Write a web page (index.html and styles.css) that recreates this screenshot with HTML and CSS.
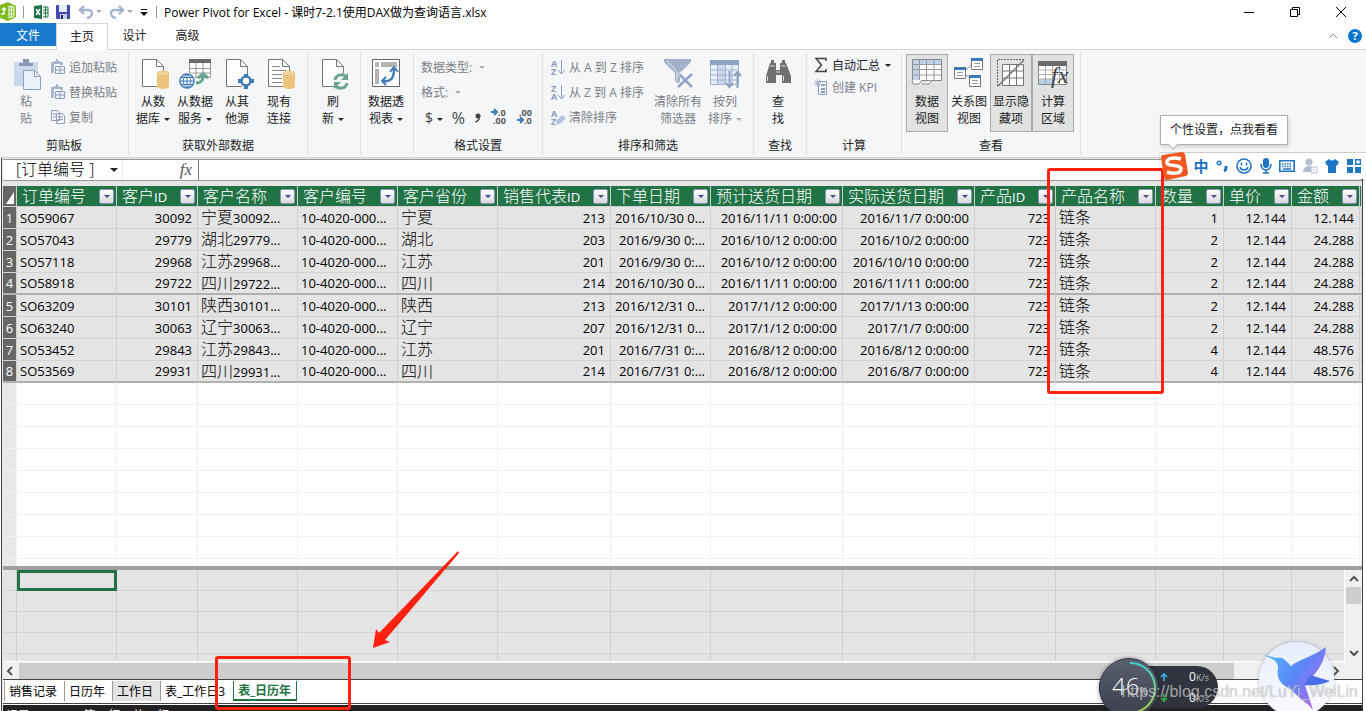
FILE: index.html
```html
<!DOCTYPE html>
<html lang="zh-CN">
<head>
  <meta charset="utf-8">
  <meta name="viewport" content="width=device-width, initial-scale=1">
  <title>Power Pivot for Excel</title>
  <link rel="stylesheet" href="styles.css">
</head>
<body>
  <svg class="defs" aria-hidden="true">
    <symbol id="page" viewBox="0 0 32 32">
      <path d="M5.500 1.500h14l7 7v20h-21z" fill="#fff" stroke="#777"/>
      <path d="M19.500 1.500v7h7" fill="none" stroke="#777"/>
    </symbol>
    <symbol id="db" viewBox="0 0 14 20">
      <path d="M1 3v13c0 4 12 4 12 0V3z" fill="#ecc47c"/>
      <ellipse cx="7" cy="3.500" rx="6" ry="2.500" fill="#f3d59c" stroke="#e0b565" stroke-width=".6"/>
    </symbol>
    <symbol id="clip" viewBox="0 0 16 16">
      <path d="M1 3h3v11H1zM10 3h3v3h-3zM4 2h6v3H4zM6 0h2v2H6z" fill="#a9b6cd"/>
      <path d="M5.500 7.500h9v7h-9zM5.500 11h9M10 7.500v7" fill="#eef2fa" stroke="#8c9cba"/>
    </symbol>
  </svg>

  <div class="app">
    <header class="titlebar">
      <svg width="18" height="20" viewBox="0 0 18 20"><path d="M0 3l8-3 8 4v11l-8 4-8-3z" fill="#7fba1e"/><path d="M9 4l5 1v9l-5 2zM9 8h5M9 12h5M11.500 4v11" fill="none" stroke="#fff"/><path d="M1 12h3V6M2 8l2-2 2 2" fill="none" stroke="#fff" stroke-width="1.500"/></svg>
      <i class="bar"></i>
      <svg width="15" height="14" viewBox="0 0 15 14"><path d="M0 1l8-1v14l-8-1z" fill="#1e7145"/><path d="M2 4l4 6M6 4l-4 6" stroke="#fff" stroke-width="1.500"/><path d="M9 2h5v10H9M9 5h5M9 8h5M11.500 2v10" fill="none" stroke="#1e7145"/></svg>
      <svg class="save" width="14" height="14" viewBox="0 0 14 14"><path d="M0 0h14v14H1l-1-1z" fill="#4349b0"/><path d="M3 0h8v7H3z" fill="#e8edfb"/><path d="M4 9h7v5H4z" fill="#c5cbe8"/><path d="M5 10h2v4H5z" fill="#222a66"/></svg>
      <svg width="16" height="14" viewBox="0 0 16 14"><path d="M1 5h9c6 0 5 7-1 8M6 1L2 5l4 4" fill="none" stroke="#a3b4d1" stroke-width="2.400"/></svg>
      <i class="caret pale"></i>
      <svg class="redo" width="16" height="14" viewBox="0 0 16 14"><path d="M15 5H6C0 5 1 12 7 13M10 1l4 4-4 4" fill="none" stroke="#a3b4d1" stroke-width="2.400"/></svg>
      <i class="caret pale"></i>
      <svg class="more" width="8" height="8" viewBox="0 0 8 8"><path d="M1 1.500h6" stroke="#111"/><path d="M0 4h8L4 8z" fill="#111"/></svg>
      <i class="bar"></i>
      <h1>Power Pivot for Excel - 课时7-2.1使用DAX做为查询语言.xlsx</h1>
      <div class="window-buttons">
        <button aria-label="最小化"><svg width="12" height="12"><path d="M1 6.500h10" stroke="#000"/></svg></button>
        <button aria-label="还原"><svg width="12" height="12"><path d="M1.500 3.500h7v7h-7zM3.500 3V1.500h7v7H9" fill="none" stroke="#000"/></svg></button>
        <button aria-label="关闭"><svg width="12" height="12"><path d="M1 1l10 10M11 1L1 11" stroke="#000"/></svg></button>
      </div>
    </header>

    <nav class="menu">
      <button class="file">文件</button>
      <button class="active">主页</button>
      <button>设计</button>
      <button>高级</button>
      <div class="menu-right">
        <svg width="10" height="6"><path d="M1 5l4-4 4 4" fill="none" stroke="#888"/></svg>
        <button class="help" aria-label="帮助">?</button>
      </div>
    </nav>

    <section class="ribbon">
      <div class="group g-clipboard">
        <div class="tools">
          <button class="big dim">
            <svg width="32" height="32" viewBox="0 0 32 32"><path d="M4 4h24v24H4z" fill="#ccd7ea"/><path d="M9 5h4V1h6v4h4v3H9z" fill="#8797b5"/><path d="M13.500 12.500h11l6 6v13h-17z" fill="#eaf0fa" stroke="#8ea0c0"/><path d="M24.500 12.500v6h6" fill="none" stroke="#8ea0c0"/></svg>
            <span>粘<br>贴</span>
          </button>
          <div class="stack">
            <button class="small dim"><svg width="16" height="16"><use href="#clip"/></svg>追加粘贴</button>
            <button class="small dim"><svg width="16" height="16"><use href="#clip"/></svg>替换粘贴</button>
            <button class="small dim"><svg width="16" height="16" viewBox="0 0 16 16"><path d="M1.500 1.500h6l2 2v8h-8zM6.500 4.500h6l2 2v8h-8z" fill="#f1f4fa" stroke="#8c9cba"/><path d="M3 5h3M3 8h3M8 8h5M8 10.500h5" stroke="#8c9cba"/></svg>复制</button>
          </div>
        </div>
        <div class="caption">剪贴板</div>
      </div>

      <div class="group g-external">
        <div class="tools">
          <button class="big"><svg width="32" height="32"><use href="#page" width="32" height="32"/><use href="#db" x="19" y="12" width="14" height="20"/></svg><span>从数<br>据库<i class="caret"></i></span></button>
          <button class="big"><svg width="32" height="32" viewBox="0 0 32 32"><path d="M10.500 1.500h21v18h-21z" fill="#fff" stroke="#999"/><path d="M10 1h22v4H10z" fill="#6b6b6b"/><path d="M10 10.500h21M10 15h21M17 5v14M24 5v14" stroke="#999"/><circle cx="8" cy="23" r="8.500" fill="#f4f6f8"/><circle cx="8" cy="23" r="7" fill="#fff" stroke="#3e7ab8" stroke-width="1.500"/><path d="M1 23h14M2 19.500h12M2 26.500h12M8 16v14M8 16c-5 4-5 10 0 14M8 16c5 4 5 10 0 14" fill="none" stroke="#3e7ab8"/><path d="M17 25c6 0 7-3 7-7M19 20l5-4 5 4" fill="none" stroke="#6aa58d" stroke-width="3"/></svg><span>从数据<br>服务<i class="caret"></i></span></button>
          <button class="big"><svg width="32" height="32" viewBox="0 0 32 32"><use href="#page" width="32" height="32"/><circle cx="25" cy="23" r="7" fill="#f4f6f8"/><circle cx="25" cy="23" r="4.500" fill="#fff" stroke="#3e7ab8" stroke-width="2.500"/><path d="M23 16h4v3h-4zM23 27h4v4h-4zM17 21h4v4h-4zM29 21h4v4h-4z" fill="#3e7ab8"/></svg><span>从其<br>他源</span></button>
          <button class="big"><svg width="32" height="32"><use href="#page" width="32" height="32"/><path d="M9 8.500h8M9 12.500h14M9 16.500h10M9 20.500h10M9 24.500h10" stroke="#888"/><use href="#db" x="19" y="12" width="14" height="20"/></svg><span>现有<br>连接</span></button>
        </div>
        <div class="caption">获取外部数据</div>
      </div>

      <div class="group g-single">
        <div class="tools">
          <button class="big"><svg width="32" height="32" viewBox="0 0 32 32"><use href="#page" width="32" height="32"/><circle cx="24" cy="23" r="8" fill="#f4f6f8"/><path d="M18 22c1-6 9-7 12-2M30 25c-1 6-9 7-12 2" fill="none" stroke="#6aa58d" stroke-width="3"/><path d="M31 15v7h-7zM17 31v-7h7z" fill="#6aa58d"/></svg><span>刷<br>新<i class="caret"></i></span></button>
        </div>
      </div>

      <div class="group g-single">
        <div class="tools">
          <button class="big"><svg width="32" height="32" viewBox="0 0 32 32"><path d="M2.500 1.500h27v27h-27z" fill="#fff" stroke="#666"/><path d="M5 4h4v5H5zM11 4h16v5H11zM5 11h4v15H5z" fill="#b3b3b3"/><path d="M13 23c8 1 11-3 11-12" fill="none" stroke="#3e7ab8" stroke-width="2.500"/><path d="M20 14l4-5 4 5M16 19l-4 4 4 4" fill="none" stroke="#3e7ab8" stroke-width="2"/></svg><span>数据透<br>视表<i class="caret"></i></span></button>
        </div>
      </div>

      <div class="group g-format">
        <div class="tools">
          <div class="stack">
            <button class="small dim">数据类型:<i class="caret pale"></i></button>
            <button class="small dim">格式:<i class="caret pale"></i></button>
            <div class="number-tools">
              <button>$<i class="caret"></i></button>
              <button class="percent">%</button>
              <button aria-label="千位分隔"><svg width="8" height="10" viewBox="0 0 8 10"><circle cx="4" cy="3" r="2.500" fill="#444"/><path d="M5.500 3c0 3-1 5-4 6" fill="none" stroke="#444" stroke-width="1.500"/></svg></button>
              <button aria-label="增加小数位数"><svg width="17" height="18" viewBox="0 0 17 18"><path d="M1 5h6M4 2l3 3-3 3" fill="none" stroke="#3e7ab8" stroke-width="2"/><text x="8" y="9">.0</text><text x="3" y="17">.00</text></svg></button>
              <button aria-label="减少小数位数"><svg width="17" height="18" viewBox="0 0 17 18"><path d="M1 13h6M4 10l3 3-3 3" fill="none" stroke="#3e7ab8" stroke-width="2"/><text x="3" y="9">.00</text><text x="8" y="17">.0</text></svg></button>
            </div>
          </div>
        </div>
        <div class="caption">格式设置</div>
      </div>

      <div class="group g-sort">
        <div class="tools">
          <div class="stack">
            <button class="small dim"><svg width="16" height="18" viewBox="0 0 16 18"><text x="1" y="9">A</text><text x="1" y="17">Z</text><path d="M11.500 2v13M8 12l3.500 4 3.500-4" fill="none" stroke="#8c9cba"/></svg>从 A 到 Z 排序</button>
            <button class="small dim"><svg width="16" height="18" viewBox="0 0 16 18"><text x="1" y="9">Z</text><text x="1" y="17">A</text><path d="M11.500 2v13M8 12l3.500 4 3.500-4" fill="none" stroke="#8c9cba"/></svg>从 Z 到 A 排序</button>
            <button class="small dim"><svg width="16" height="18" viewBox="0 0 16 18"><text x="1" y="9">A</text><text x="1" y="17">Z</text><path d="M6 13l6-6 4 3-6 6H7z" fill="#b5c2da"/></svg>清除排序</button>
          </div>
          <button class="big wide dim"><svg width="32" height="32" viewBox="0 0 32 32"><path d="M2 1h27v3L18 15v12l-5-4v-8L2 4z" fill="#a3b1ca"/><path d="M5 3l10 11v9" fill="none" stroke="#e6ebf4"/><path d="M17 15l14 14M30 15L16 29" stroke="#f4f6f8" stroke-width="5"/><path d="M17 16l13 13M30 16L16 29" stroke="#95a6c5" stroke-width="2.500"/></svg><span>清除所有<br>筛选器</span></button>
          <button class="big dim"><svg width="32" height="32" viewBox="0 0 32 32"><path d="M1.500 2.500h28v24h-28z" fill="#e9effa" stroke="#a3b1ca"/><path d="M1 2h29v5H1z" fill="#8fa1c1"/><path d="M9 7h7v19H9z" fill="#c9d6eb"/><path d="M1 12h28M1 17h28M1 22h28M8.500 7v19M16.500 7v19M23 7v19" stroke="#a3b1ca"/><path d="M20.500 13v16M17 25l3.500 4 3.500-4M28.500 30V14M25 18l3.500-4 3.500 4" fill="none" stroke="#8fa1c1" stroke-width="2"/></svg><span>按列<br>排序<i class="caret pale"></i></span></button>
        </div>
        <div class="caption">排序和筛选</div>
      </div>

      <div class="group g-single g-find">
        <div class="tools">
          <button class="big"><svg width="32" height="32" viewBox="0 0 32 32"><path d="M9 2h3v3h2v7h4V5h2V2h3v3h1l5 13v7h-9v-8h-6v8H4v-7L8 5h1z" fill="#6f6f6f"/><path d="M8 8h5M19 8h5M5.500 18v5M21.500 18v5M14 14h4" stroke="#ddd"/></svg><span>查<br>找</span></button>
        </div>
        <div class="caption">查找</div>
      </div>

      <div class="group g-calc">
        <div class="tools">
          <div class="stack tight">
            <button class="small"><svg width="14" height="16" viewBox="0 0 14 16"><path d="M12 4V1.500H2L7.500 8 2 14.500h10V12" fill="none" stroke="#444" stroke-width="1.500"/></svg>自动汇总<i class="caret"></i></button>
            <button class="small dim"><svg width="14" height="16" viewBox="0 0 14 16"><path d="M4.500 2.500h8v13h-8z" fill="#eef2fa" stroke="#8c9cba"/><path d="M7 6h4M7 10h4M7 13h4" stroke="#8c9cba" stroke-width="2"/><path d="M0 4h7M3.500 0v8M1 1l5 6M6 1L1 7" stroke="#a9b6cd"/></svg>创建 KPI</button>
          </div>
        </div>
        <div class="caption">计算</div>
      </div>

      <div class="group g-view">
        <div class="tools">
          <button class="big on"><svg width="32" height="32" viewBox="0 0 32 32"><path d="M1.500 1.500h29v21h-29z" fill="#fff" stroke="#888"/><path d="M2 2h28v5H2zM2 7h6v15H2z" fill="#bed3ea"/><path d="M1 6.500h29M1 11.500h29M1 17h29M8.500 2v20M15.500 2v20M23 2v20" stroke="#999"/><path d="M1 22l1 4h6l3-4M11 26h7l3-4" fill="#fff" stroke="#888"/></svg><span>数据<br>视图</span></button>
          <button class="big"><svg width="32" height="32" viewBox="0 0 32 32"><path d="M12 13l8-8M12 16l6 5" stroke="#888"/><path d="M1.500 9.500h11v11h-11zM18.500.500h11v11h-11zM16.500 17.500h11v11h-11z" fill="#fff" stroke="#777"/><path d="M1 9h12v3H1zM18 0h12v3H18zM16 17h12v3H16z" fill="#3e7ab8"/><path d="M4 14.500h6M4 17.500h6M21 5.500h6M21 8.500h6M19 22.500h6M19 25.500h6" stroke="#999"/></svg><span>关系图<br>视图</span></button>
          <button class="big on"><svg width="32" height="32" viewBox="0 0 32 32"><path d="M7.500 6.500h21v21h-21z" fill="#fff" stroke="#777"/><path d="M7 13h21M7 20h21M14.500 7v21M21.500 7v21" stroke="#777"/><path d="M2.500 28V1.500H29" fill="none" stroke="#666" stroke-dasharray="2 1"/><path d="M3 28L29 2" stroke="#777" stroke-width="1.500"/></svg><span>显示隐<br>藏项</span></button>
          <button class="big on"><svg width="32" height="32" viewBox="0 0 32 32"><path d="M1.500 3.500h28v23h-28z" fill="#fff" stroke="#888"/><path d="M1 3h29v5H1z" fill="#6b6b6b"/><path d="M2 21h14v5H2z" fill="#b8cfe9"/><path d="M1 12h28M1 16.500h28M1 21h28M8.500 8v18M15.500 8v18M22.500 8v18" stroke="#aaa"/><text class="fx" x="14" y="25">fx</text></svg><span>计算<br>区域</span></button>
        </div>
        <div class="caption">查看</div>
      </div>
    </section>

    <main class="workspace">
      <div class="formula">
        <label class="namebox">
          <select aria-label="列名"><option>[订单编号 ]</option></select>
          <i class="caret large"></i>
        </label>
        <span class="fx-label">fx</span>
        <input type="text" aria-label="公式">
      </div>

      <div class="grid-area">
        <table class="grid" id="data"></table>
      </div>

      <div class="splitter"></div>

      <div class="calc-area">
        <div class="calc-cells"><table class="grid" id="measures"></table></div>
        <div class="vscroll">
          <svg width="10" height="8"><path d="M1 6l4-4 4 4" fill="none" stroke="#555" stroke-width="2"/></svg>
          <div class="thumb"></div>
          <svg class="down" width="10" height="8"><path d="M1 2l4 4 4-4" fill="none" stroke="#555" stroke-width="2"/></svg>
        </div>
      </div>

      <div class="hscroll">
        <svg width="16" height="10"><path d="M9 1L5 5l4 4" fill="none" stroke="#555" stroke-width="2"/></svg>
        <div class="thumb"></div>
        <svg class="next" width="16" height="10"><path d="M5 1l4 4-4 4" fill="none" stroke="#555" stroke-width="2"/></svg>
      </div>

      <nav class="sheets">
        <button>销售记录</button>
        <button>日历年</button>
        <button class="hover">工作日</button>
        <button>表_工作日3</button>
        <button class="current">表_日历年</button>
      </nav>

      <footer class="status"><span>记录:</span><span>第 1 行，共 8 行</span></footer>
    </main>

    <!-- red marks -->
    <div class="mark mark-column"></div>
    <div class="mark mark-sheet"></div>
    <svg class="arrow" width="88" height="98" viewBox="0 0 88 98"><path d="M86 0L7 82l-3-4-3 19 17-6-5-2 12-14L87 2z" fill="#ff2213"/></svg>

    <!-- input method bar -->
    <div class="tip">个性设置，点我看看</div>
    <div class="ime">
      <svg class="sogou" width="28" height="28" viewBox="0 0 28 28"><path d="M1 5q0-2 2-2l19-3q2 0 3 2l3 19q0 2-2 3L7 28q-2 0-3-2z" fill="#f1581f"/><path d="M21 7C14 5 6 6 7 11c1 4 14 1 14 6 0 5-8 5-14 3" fill="none" stroke="#fff" stroke-width="3.500"/></svg>
      <b>中</b>
      <svg width="13" height="14" viewBox="0 0 13 14"><circle cx="3" cy="4" r="1.800" fill="none" stroke="#1d74c4" stroke-width="1.400"/><path d="M10 7v2q0 2-2 3" fill="none" stroke="#1d74c4" stroke-width="3"/></svg>
      <svg width="16" height="16" viewBox="0 0 16 16"><circle cx="8" cy="8" r="7" fill="none" stroke="#1d74c4" stroke-width="1.600"/><path d="M5.500 4.500v3M10.500 4.500v3M4 9c1 4 7 4 8 0" fill="none" stroke="#1d74c4" stroke-width="1.500"/></svg>
      <svg width="12" height="16" viewBox="0 0 12 16"><rect x="3" width="6" height="10" rx="3" fill="#1d74c4"/><path d="M1 6c0 8 10 8 10 0M6 12v3M3 15h6" fill="none" stroke="#1d74c4" stroke-width="1.600"/></svg>
      <svg width="16" height="12" viewBox="0 0 16 12"><path d="M.8.800h14.400v10.400H.8z" fill="none" stroke="#1d74c4" stroke-width="1.600"/><path d="M3 4h10M3 6.500h10" stroke="#1d74c4" stroke-width="1.500" stroke-dasharray="1.500 1"/><path d="M4 9h8" stroke="#1d74c4" stroke-width="1.500"/></svg>
      <svg width="15" height="16" viewBox="0 0 15 16"><circle cx="6" cy="4" r="3.500" fill="#b5bdd0"/><path d="M0 14c0-8 12-8 12 0z" fill="#b5bdd0"/><path d="M8 9h6v6H8z" fill="#fff" stroke="#b5bdd0"/><path d="M11 11v2" stroke="#b5bdd0"/></svg>
      <svg width="14" height="14" viewBox="0 0 14 14"><path d="M4 0q3 3 6 0l4 3-2 4-1-1v8H3V6L2 7 0 3z" fill="#1d74c4"/></svg>
      <svg width="14" height="14" viewBox="0 0 14 14"><path d="M0 0h6v6H0zM0 8h6v6H0zM8 8h6v6H8z" fill="#1d74c4"/><path d="M8.700.700h4.600v4.600H8.700z" fill="none" stroke="#1d74c4" stroke-width="1.400"/></svg>
    </div>

    <!-- desktop widgets -->
    <div class="meter">
      <div class="speed">
        <p><svg width="8" height="8"><path d="M4 8V1M1 4l3-3 3 3" fill="none" stroke="#3fb1ee" stroke-width="1.600"/></svg><span>0<small>K/s</small></span></p>
        <p><svg width="8" height="8"><path d="M4 0v7M1 4l3 3 3-3" fill="none" stroke="#2bb14a" stroke-width="1.600"/></svg><span>0<small>K/s</small></span></p>
      </div>
      <div class="dial">
        <svg width="58" height="58" viewBox="0 0 58 58"><defs><linearGradient id="ring" x2="0" y2="1"><stop offset="0" stop-color="#3ed0cc"/><stop offset="1" stop-color="#a7d04a"/></linearGradient></defs><path d="M30 4a25 25 0 0 1 7 49" fill="none" stroke="url(#ring)" stroke-width="2"/></svg>
        <span>46<small>%</small></span>
      </div>
    </div>
    <div class="bird">
      <svg width="66" height="66" viewBox="0 0 66 66"><defs><linearGradient id="wing" x1="0" y1="0" x2="1" y2=".7"><stop offset="0" stop-color="#4fc0fc"/><stop offset=".55" stop-color="#5a86f8"/><stop offset="1" stop-color="#b06af0"/></linearGradient></defs><path d="M0 8l13 3c4-1 7 0 9 3l5 5C36 12 48 10 62 0c-1 11-5 20-13 29-3 4-6 6-8 9l8 25c-6-8-15-12-22-21C17 38 12 32 14 21c0-4-1-5-4-8z" fill="url(#wing)"/><path d="M46 28l20 6c-8 4-16 5-26 4z" fill="#496ee8"/></svg>
    </div>
    <div class="watermark">https://blog.csdn.net/LuYi_WeiLin</div>
  </div>

  <script src="script.js"></script>
</body>
</html>
```
FILE: styles.css
```css
* {
  box-sizing: border-box;
}

body {
  margin: 0;
  font-family: "Open Sans", "Noto Sans CJK SC", sans-serif;
  font-size: 12px;
  color: #222;
  background: #fff;
}

button {
  font: inherit;
  color: inherit;
  background: none;
  border: 0;
  padding: 0;
}

svg {
  flex: none;
  overflow: visible;
}

.defs {
  position: absolute;
  width: 0;
  height: 0;
}

.app {
  position: relative;
  display: flex;
  flex-direction: column;
  height: 100vh;
  overflow: hidden;
}

.caret {
  display: inline-block;
  margin-left: 4px;
  border: 3px solid transparent;
  border-top-color: #222;
  border-bottom: 0;
  vertical-align: middle;
}

.caret.pale {
  border-top-color: #aaa;
}

.caret.large {
  border-width: 4px 4px 0;
  margin: 0;
}

/* title bar */
.titlebar {
  display: flex;
  align-items: center;
  height: 23px;
}

.titlebar h1 {
  margin: 0 0 0 7px;
  font-size: 12px;
  font-weight: 400;
  color: #000;
  white-space: nowrap;
}

.bar {
  width: 1px;
  height: 12px;
  margin: 0 10px 0 5px;
  background: #999;
}

.more + .bar {
  margin: 0 0 0 8px;
}

.titlebar .caret {
  margin-left: 2px;
}

.save {
  margin: 0 8px 0 7px;
}

.redo {
  margin-left: 7px;
}

.more {
  margin-left: 7px;
}

.window-buttons {
  display: flex;
  margin-left: auto;
  padding-right: 2px;
}

.window-buttons button {
  display: flex;
  justify-content: center;
  width: 46px;
}

/* menu tabs */
.menu {
  display: flex;
  height: 27px;
  border-bottom: 1px solid #d5d7da;
}

.menu button {
  width: 53px;
  height: 24px;
}

.menu .file {
  width: 56px;
  height: 23px;
  color: #fff;
  background: #1979ca;
}

.menu .active {
  width: 52px;
  height: 27px;
  padding-bottom: 2px;
  background: #fff;
  border: 1px solid #d5d7da;
  border-bottom: 0;
}

.menu-right {
  display: flex;
  align-items: center;
  gap: 10px;
  margin-left: auto;
  padding-right: 4px;
}

.menu .help {
  width: 14px;
  height: 14px;
  border-radius: 50%;
  color: #fff;
  background: #0f76cf;
  font-weight: 700;
  font-size: 11px;
  line-height: 14px;
}

/* ribbon */
.ribbon {
  display: flex;
  height: 108px;
  padding: 2px 0;
  background: #f4f6f8;
  border-bottom: 1px solid #d0d2d4;
}

.group {
  display: flex;
  flex-direction: column;
  flex: none;
  border-right: 1px solid #dfe1e3;
}

.tools {
  display: flex;
  flex: 1;
  padding-top: 2px;
}

.caption {
  height: 18px;
  line-height: 18px;
  text-align: center;
}

.g-clipboard { width: 129px; }
.g-external { width: 179px; }
.g-single { width: 53px; }
.g-format { width: 129px; }
.g-sort { width: 211px; }
.g-calc { width: 95px; }
.g-view { width: 179px; }

.g-clipboard .tools {
  padding-left: 5px;
}

.g-single .tools,
.g-view .tools {
  padding-left: 4px;
}

.g-find .tools,
.g-external .tools {
  padding-left: 3px;
}

.g-format .tools,
.g-sort .tools,
.g-calc .tools {
  padding-left: 7px;
}

.big {
  display: flex;
  flex-direction: column;
  align-items: center;
  flex: none;
  width: 42px;
  height: 78px;
  padding-top: 3px;
  line-height: 17px;
  white-space: nowrap;
  border: 1px solid transparent;
}

.big span {
  margin-top: 3px;
}

.big.wide {
  width: 52px;
}

.big.on {
  background: #e1e3e3;
  border-color: #a8abae;
}

.dim {
  color: #7c7f84;
}

.stack {
  display: flex;
  flex-direction: column;
  margin-left: 3px;
  width: 78px;
}

.g-format .stack {
  margin-left: 0;
  width: 118px;
}

.g-sort .stack {
  margin-left: 0;
  width: 102px;
}

.g-calc .stack {
  width: 84px;
  margin-left: 0;
}

.small {
  display: flex;
  align-items: center;
  gap: 3px;
  height: 25px;
  padding-top: 1px;
  white-space: nowrap;
}

.stack.tight .small {
  height: 22px;
  padding: 0;
}

.g-calc .small {
  gap: 4px;
}

.g-calc .caret {
  margin-left: 1px;
}

.small text {
  font: 700 9px "Open Sans", sans-serif;
  fill: #8c9cba;
}

.number-tools {
  display: flex;
  align-items: center;
  justify-content: space-between;
  height: 27px;
  padding: 0 6px 0 4px;
  color: #444;
  font-size: 14px;
}

.number-tools .percent {
  font-size: 16px;
}

.number-tools text {
  font: 700 9px "Open Sans", sans-serif;
  fill: #555;
}

.big .fx {
  font: italic 24px "Liberation Serif", serif;
  fill: #444;
}

/* workspace */
.workspace {
  display: flex;
  flex-direction: column;
  flex: 1;
  min-height: 0;
  margin: 0 3px 0 1px;
  padding: 1px 0 0 1px;
  border-left: 1px solid #444;
  border-right: 1px solid #444;
  background: #e5e5e5;
}

.formula {
  display: flex;
  flex: none;
  height: 22px;
  margin-bottom: 5px;
  background: #fff;
  border: 1px solid #9a9a9a;
  border-left: 0;
}

.namebox {
  display: flex;
  align-items: center;
  width: 120px;
  border-right: 1px solid #ececec;
}

.namebox select {
  appearance: none;
  width: 107px;
  height: 20px;
  padding: 0 0 1px 13px;
  border: 0;
  background: none;
  color: #000;
  font: 300 16px/19px "Open Sans", "Noto Sans CJK SC", sans-serif;
}

.fx-label {
  width: 76px;
  padding-right: 6px;
  border-right: 1px solid #777;
  color: #555;
  text-align: right;
  font: italic 17px/20px "Liberation Serif", serif;
}

.formula input {
  flex: 1;
  border: 0;
  min-width: 0;
  background: none;
}

.grid-area {
  flex: 1;
  min-height: 0;
  overflow: hidden;
  background: #fff;
}

.grid {
  width: 100%;
  table-layout: fixed;
  border-collapse: separate;
  border-spacing: 0;
  font-size: 13px;
  color: #000;
}

.grid th,
.grid td {
  height: 22px;
  padding: 0 5px 0 3px;
  overflow: hidden;
  white-space: nowrap;
  line-height: 18px;
  border-right: 1px solid #cfcfcf;
  border-bottom: 1px solid #d3d3d3;
}

.grid td {
  background: #e4e4e4;
}

.grid .num {
  text-align: right;
}

.cn {
  font-size: 16px;
  font-weight: 300;
}

.grid thead th {
  height: 21px;
  padding: 0 2px 0 5px;
  color: #fff;
  background: #217346;
  text-align: left;
  font-weight: 400;
}

.grid thead .corner {
  padding: 0;
  background: #666;
}

.corner svg {
  display: block;
  margin: 4px 0 0 2px;
}

.head {
  display: flex;
  align-items: center;
  justify-content: space-between;
  height: 20px;
}

.filter {
  display: flex;
  align-items: center;
  justify-content: center;
  flex: none;
  width: 15px;
  height: 15px;
  border: 1px solid #8795b4;
  border-radius: 2px;
  background: linear-gradient(#fff, #d8d8de);
}

.filter .caret {
  margin: 0;
  border-top-color: #3c4a86;
}

.grid tbody th {
  padding: 0;
  text-align: center;
  font-weight: 400;
  color: #fff;
  background: #666;
}

.grid .group-end th,
.grid .group-end td {
  border-bottom: 2px solid #b0b0b0;
}

.grid .blank th {
  background: #e8e8e8;
  border-color: #f0f0f0;
}

.grid .blank td {
  background: #fff;
  border-color: #f0f0f0;
}

.splitter {
  flex: none;
  height: 4px;
  background: #9f9f9f;
}

/* calculation area */
.calc-area {
  display: flex;
  flex: none;
  height: 92px;
}

.calc-cells {
  flex: 1;
  overflow: hidden;
  border-right: 1px solid #fff;
  border-bottom: 1px solid #fff;
}

#measures th,
#measures td {
  height: 21px;
  background: #e4e4e4;
}

#measures .selected {
  border: 3px solid #217346;
}

.vscroll {
  display: flex;
  flex-direction: column;
  align-items: center;
  width: 17px;
  padding: 5px 0;
  background: #f0f0f0;
}

.vscroll .thumb {
  width: 15px;
  height: 17px;
  margin-top: 4px;
  background: #cdcdcd;
}

.vscroll .down {
  margin-top: auto;
}

.hscroll {
  display: flex;
  align-items: center;
  flex: none;
  height: 17px;
  padding-right: 17px;
  background: #f0f0f0;
}

.hscroll .thumb {
  flex: 1;
  height: 16px;
  margin-right: 95px;
  background: #cdcdcd;
}

/* sheet tabs */
.sheets {
  display: flex;
  flex: none;
  height: 25px;
  padding: 0 0 2px 1px;
  background: #fff;
  border-top: 1px solid #444;
  border-bottom: 1px solid #444;
}

.sheets button {
  height: 20px;
  margin-top: 1px;
  padding: 0 7px 0 4px;
  color: #000;
  border-left: 1px solid #999;
}

.sheets .hover {
  background: #e3e3e3;
}

.sheets .current {
  margin-left: 1px;
  padding: 0 5px 0 4px;
  color: #217346;
  font-weight: 700;
  border: 1px solid #217346;
  border-top: 0;
  border-bottom-width: 2px;
}

.status {
  display: flex;
  flex: none;
  gap: 50px;
  height: 24px;
  margin-bottom: -17px;
  padding: 1px 0 0 3px;
  color: #fff;
  background: #222;
  border-top: 1px solid #fff;
}

/* red marks */
.mark {
  position: absolute;
  border: 3px solid #ff2213;
  border-radius: 3px;
}

.mark-column {
  left: 1047px;
  top: 168px;
  width: 117px;
  height: 226px;
}

.mark-sheet {
  left: 215px;
  bottom: 1px;
  width: 136px;
  height: 54px;
}

.arrow {
  position: absolute;
  left: 372px;
  bottom: 62px;
}

/* input method bar */
.tip {
  position: absolute;
  top: 115px;
  right: 78px;
  height: 30px;
  padding: 0 9px;
  line-height: 28px;
  color: #222;
  background: #fff;
  border: 1px solid #aab0b5;
  box-shadow: 1px 2px 4px rgba(0, 0, 0, 0.15);
}

.tip::after {
  content: "";
  position: absolute;
  left: 8px;
  bottom: -4px;
  width: 7px;
  height: 7px;
  background: #fff;
  border: 1px solid #aab0b5;
  border-width: 0 1px 1px 0;
  transform: rotate(45deg);
}

.ime {
  position: absolute;
  top: 152px;
  right: 0;
  display: flex;
  align-items: center;
  justify-content: space-between;
  width: 206px;
  height: 27px;
  padding: 0 5px 1px 0;
  background: linear-gradient(90deg, transparent 10px, #fff 10px);
  border-top: 1px solid #ccc;
  box-shadow: 0 1px 2px rgba(0, 0, 0, 0.2);
}

.ime b {
  font-size: 15px;
  line-height: 18px;
  color: #1d74c4;
}

.sogou {
  margin-right: -2px;
}

/* desktop widgets */
.meter {
  position: absolute;
  right: 148px;
  bottom: -6px;
  display: flex;
  align-items: center;
  width: 119px;
  height: 60px;
}

.dial {
  position: absolute;
  left: 0;
  top: 1px;
  width: 60px;
  height: 60px;
  border: 1px solid #30333c;
  border-radius: 50%;
  background: linear-gradient(#596070, #3b3e4b);
  box-shadow: 0 0 4px rgba(0, 0, 0, 0.4);
  color: #fff;
}

.dial svg {
  display: block;
}

.dial span {
  position: absolute;
  left: 12px;
  top: 12px;
  font: 300 24px/30px "Open Sans", sans-serif;
}

.dial small {
  font-size: 10px;
}

.speed {
  width: 100%;
  height: 42px;
  padding: 0 9px 0 61px;
  border-radius: 21px;
  background: #30343f;
  color: #fff;
}

.speed p {
  display: flex;
  align-items: center;
  justify-content: space-between;
  margin: 0;
  height: 21px;
}

.speed small {
  font-size: 9px;
  color: #bbb;
}

.bird {
  position: absolute;
  right: 32px;
  bottom: -6px;
  width: 75px;
  height: 75px;
  padding: 5px;
  border-radius: 50%;
  background: linear-gradient(#e6ecfc, #fbfcff);
  box-shadow: 0 0 4px rgba(80, 90, 140, 0.4);
}

.watermark {
  position: absolute;
  right: 8px;
  bottom: 9px;
  font: 16px/20px "Liberation Sans", sans-serif;
  color: rgba(255, 255, 255, 0.6);
  text-shadow: 0 0 1px rgba(0, 0, 0, 0.4);
}
```
FILE: script.js
```js
const columns = [
  ['订单编号', 100], ['客户ID', 81], ['客户名称', 100], ['客户编号', 100],
  ['客户省份', 100], ['销售代表ID', 113], ['下单日期', 100], ['预计送货日期', 132],
  ['实际送货日期', 132], ['产品ID', 81], ['产品名称', 100], ['数量', 68],
  ['单价', 68], ['金额', 68]
];

const textColumns = [0, 2, 3, 4, 10];

const rows = [
  ['SO59067', '30092', '宁夏30092...', '10-4020-000...', '宁夏', '213', '2016/10/30 0...', '2016/11/11 0:00:00', '2016/11/7 0:00:00', '723', '链条', '1', '12.144', '12.144'],
  ['SO57043', '29779', '湖北29779...', '10-4020-000...', '湖北', '203', '2016/9/30 0:...', '2016/10/12 0:00:00', '2016/10/2 0:00:00', '723', '链条', '2', '12.144', '24.288'],
  ['SO57118', '29968', '江苏29968...', '10-4020-000...', '江苏', '201', '2016/9/30 0:...', '2016/10/12 0:00:00', '2016/10/10 0:00:00', '723', '链条', '2', '12.144', '24.288'],
  ['SO58918', '29722', '四川29722...', '10-4020-000...', '四川', '214', '2016/10/30 0...', '2016/11/11 0:00:00', '2016/11/11 0:00:00', '723', '链条', '2', '12.144', '24.288'],
  ['SO63209', '30101', '陕西30101...', '10-4020-000...', '陕西', '213', '2016/12/31 0...', '2017/1/12 0:00:00', '2017/1/13 0:00:00', '723', '链条', '2', '12.144', '24.288'],
  ['SO63240', '30063', '辽宁30063...', '10-4020-000...', '辽宁', '207', '2016/12/31 0...', '2017/1/12 0:00:00', '2017/1/7 0:00:00', '723', '链条', '2', '12.144', '24.288'],
  ['SO53452', '29843', '江苏29843...', '10-4020-000...', '江苏', '201', '2016/7/31 0:...', '2016/8/12 0:00:00', '2016/8/12 0:00:00', '723', '链条', '4', '12.144', '48.576'],
  ['SO53569', '29931', '四川29931...', '10-4020-000...', '四川', '214', '2016/7/31 0:...', '2016/8/12 0:00:00', '2016/8/7 0:00:00', '723', '链条', '4', '12.144', '48.576']
];

// Chinese text is set larger than digits and latin letters
function mixed(text) {
  return text.replace(/[\u4e00-\u9fa5]+/g, '<span class="cn">$&</span>');
}

const colgroup = '<colgroup><col style="width:14px">' +
  columns.map(c => `<col style="width:${c[1]}px">`).join('') + '<col></colgroup>';

const head = columns.map(c =>
  `<th><div class="head"><span>${mixed(c[0])}</span><button class="filter" aria-label="筛选"><i class="caret"></i></button></div></th>`
).join('');

const body = rows.map((row, i) => {
  const cells = row.map((v, j) =>
    `<td class="${textColumns.includes(j) ? '' : 'num'}">${mixed(v)}</td>`).join('');
  return `<tr class="${i % 4 === 3 ? 'group-end' : ''}"><th>${i + 1}</th>${cells}<td></td></tr>`;
}).join('');

const empty = '<td></td>'.repeat(columns.length + 1);

document.getElementById('data').innerHTML = colgroup +
  `<thead><tr><th class="corner"><svg width="10" height="14"><path d="M9 1v12H1z" fill="#fff"/></svg></th>${head}<th></th></tr></thead>` +
  `<tbody>${body}${`<tr class="blank"><th></th>${empty}</tr>`.repeat(12)}</tbody>`;

document.getElementById('measures').innerHTML = colgroup + '<tbody>' +
  `<tr><th></th><td class="selected"></td>${'<td></td>'.repeat(columns.length)}</tr>` +
  `<tr><th></th>${empty}</tr>`.repeat(4) + '</tbody>';
```
